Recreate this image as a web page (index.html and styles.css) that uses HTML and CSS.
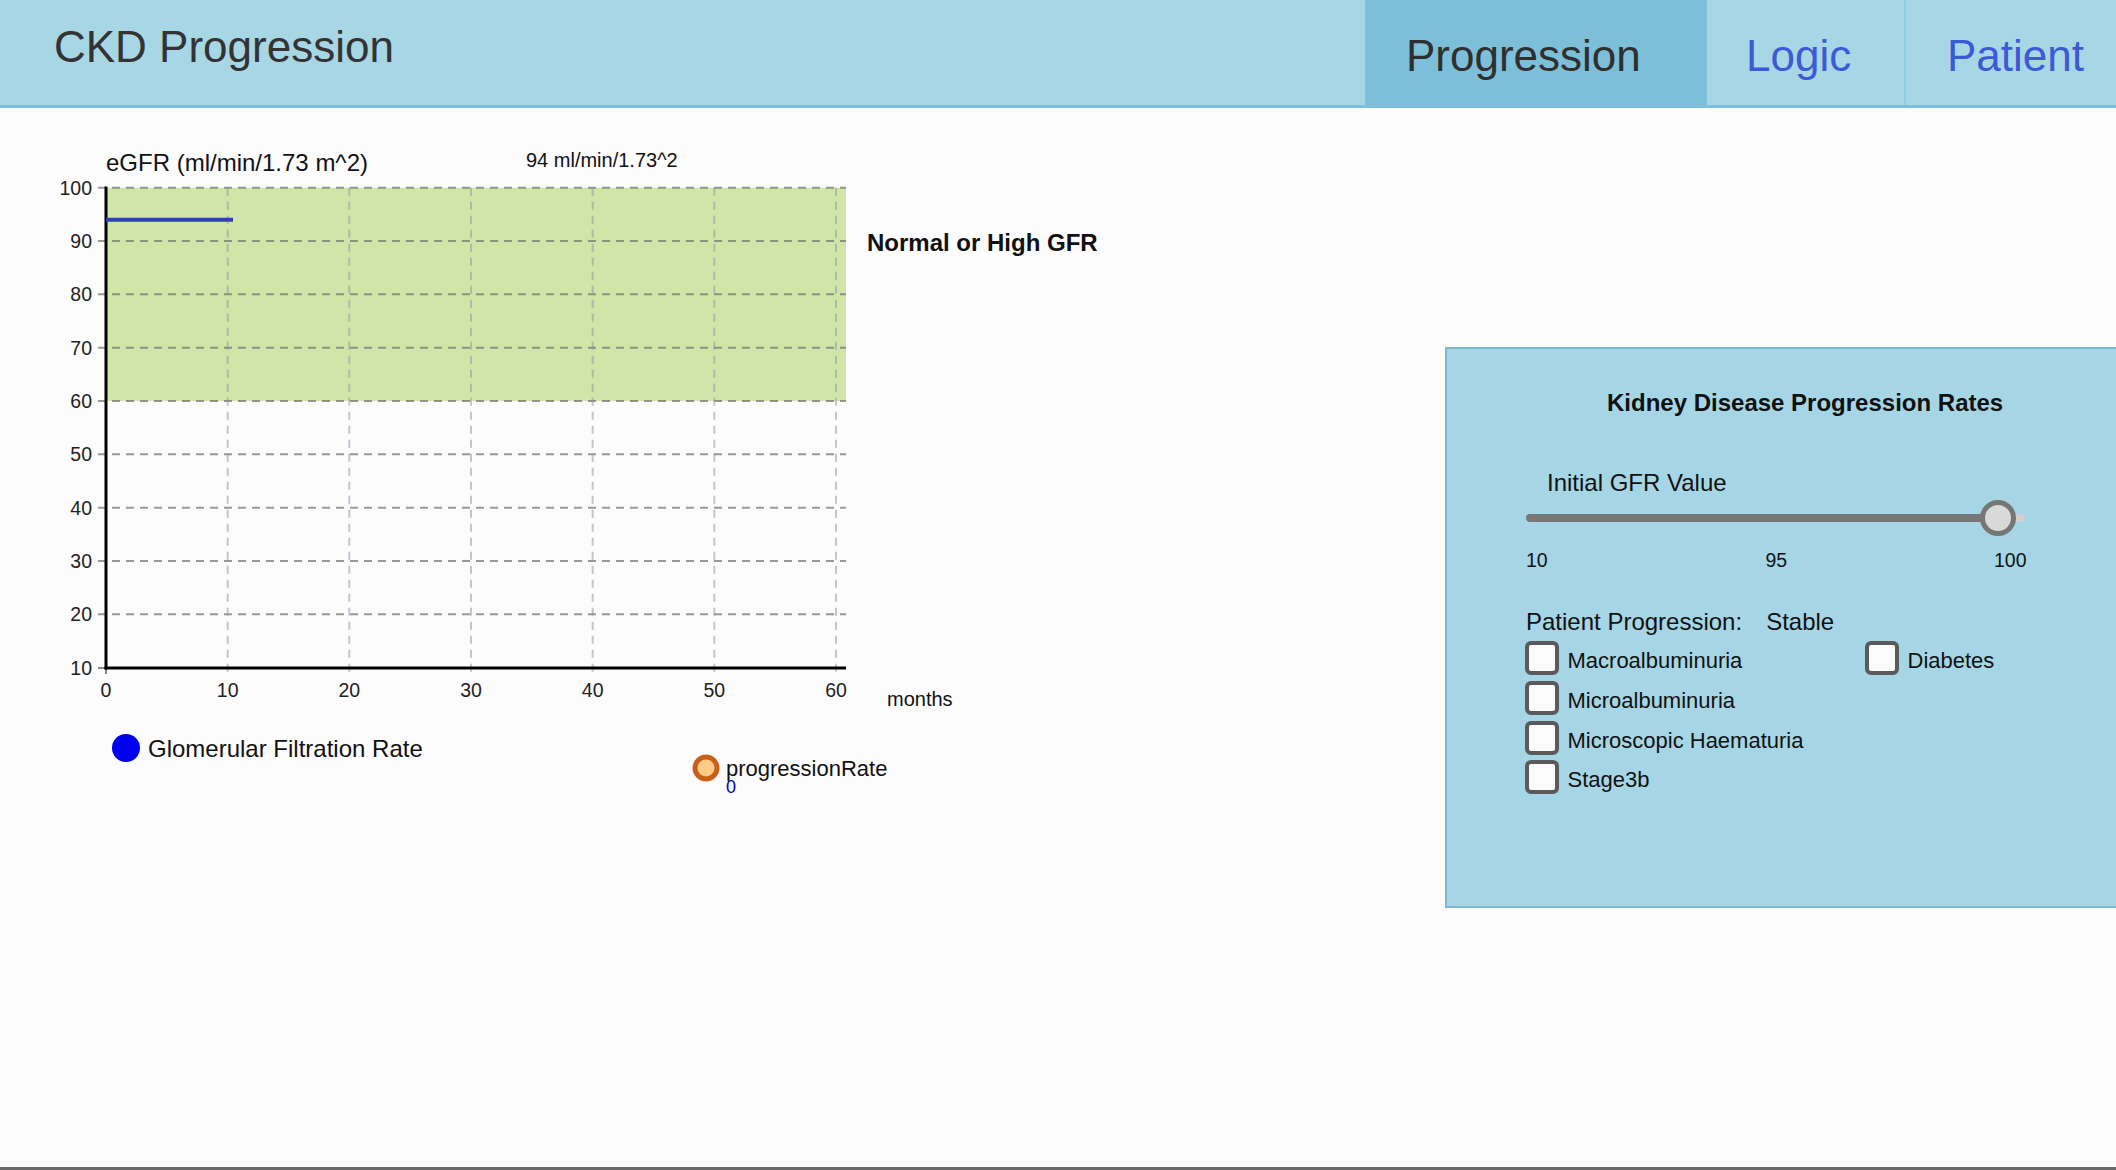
FILE: index.html
```html
<!DOCTYPE html>
<html lang="en">
<head>
<meta charset="utf-8">
<title>CKD Progression</title>
<link rel="stylesheet" href="styles.css">
</head>
<body>
<div class="page">
  <header class="topbar">
    <h1 class="brand">CKD Progression</h1>
    <nav class="tabs">
      <a class="tab tab-progression active">Progression</a>
      <a class="tab tab-logic">Logic</a>
      <a class="tab tab-patient">Patient</a>
    </nav>
  </header>
  <main class="content">
    <svg class="chart" width="1160" height="700" viewBox="0 108 1160 700" xmlns="http://www.w3.org/2000/svg">
      <rect class="zone-normal" x="106" y="187.7" width="740" height="213.3"/>
      <g class="grid-h">
        <line x1="98" y1="187.7" x2="846" y2="187.7"/>
        <line x1="98" y1="241" x2="846" y2="241"/>
        <line x1="98" y1="294.3" x2="846" y2="294.3"/>
        <line x1="98" y1="347.7" x2="846" y2="347.7"/>
        <line x1="98" y1="401" x2="846" y2="401"/>
        <line x1="98" y1="454.3" x2="846" y2="454.3"/>
        <line x1="98" y1="507.7" x2="846" y2="507.7"/>
        <line x1="98" y1="561" x2="846" y2="561"/>
        <line x1="98" y1="614.3" x2="846" y2="614.3"/>
      </g>
      <g class="grid-v">
        <line x1="227.7" y1="187.7" x2="227.7" y2="674"/>
        <line x1="349.3" y1="187.7" x2="349.3" y2="674"/>
        <line x1="471" y1="187.7" x2="471" y2="674"/>
        <line x1="592.7" y1="187.7" x2="592.7" y2="674"/>
        <line x1="714.3" y1="187.7" x2="714.3" y2="674"/>
        <line x1="836" y1="187.7" x2="836" y2="674"/>
      </g>
      <line class="tick" x1="98" y1="668" x2="106" y2="668"/>
      <line class="tick" x1="106" y1="668" x2="106" y2="674"/>
      <line class="axis" x1="106" y1="186.5" x2="106" y2="669.5"/>
      <line class="axis" x1="104.5" y1="668" x2="846" y2="668"/>
      <g class="ylabels">
        <text x="92" y="194.7">100</text>
        <text x="92" y="248">90</text>
        <text x="92" y="301.3">80</text>
        <text x="92" y="354.7">70</text>
        <text x="92" y="408">60</text>
        <text x="92" y="461.3">50</text>
        <text x="92" y="514.7">40</text>
        <text x="92" y="568">30</text>
        <text x="92" y="621.3">20</text>
        <text x="92" y="675">10</text>
      </g>
      <g class="xlabels">
        <text x="106" y="697">0</text>
        <text x="227.7" y="697">10</text>
        <text x="349.3" y="697">20</text>
        <text x="471" y="697">30</text>
        <text x="592.7" y="697">40</text>
        <text x="714.3" y="697">50</text>
        <text x="836" y="697">60</text>
      </g>
      <line class="gfr-line" x1="106" y1="219.7" x2="233" y2="219.7"/>
      <text class="y-title" x="106" y="171">eGFR (ml/min/1.73 m^2)</text>
      <text class="current" x="526" y="167">94 ml/min/1.73^2</text>
      <text class="zone-label" x="867" y="251">Normal or High GFR</text>
      <text class="x-title" x="887" y="706">months</text>
      <circle class="legend-gfr" cx="126" cy="748" r="14"/>
      <text class="legend-text" x="148" y="757">Glomerular Filtration Rate</text>
      <circle class="legend-rate" cx="706" cy="768" r="11"/>
      <text class="legend-rate-text" x="726" y="776">progressionRate</text>
      <text class="legend-rate-value" x="726" y="793">0</text>
    </svg>

    <section class="panel">
      <h2 class="panel-title">Kidney Disease Progression Rates</h2>
      <div class="slider-label">Initial GFR Value</div>
      <div class="slider">
        <div class="track">
          <div class="track-fill"></div>
        </div>
        <div class="thumb"></div>
      </div>
      <div class="slider-scale">
        <span class="scale-min">10</span>
        <span class="scale-val">95</span>
        <span class="scale-max">100</span>
      </div>
      <div class="status">
        <span>Patient Progression:</span><span class="status-value">Stable</span>
      </div>
      <div class="checks">
        <div class="check-col">
          <label class="check"><span class="box"></span><span class="check-text">Macroalbuminuria</span></label>
          <label class="check"><span class="box"></span><span class="check-text">Microalbuminuria</span></label>
          <label class="check"><span class="box"></span><span class="check-text">Microscopic Haematuria</span></label>
          <label class="check"><span class="box"></span><span class="check-text">Stage3b</span></label>
        </div>
        <div class="check-col">
          <label class="check"><span class="box"></span><span class="check-text">Diabetes</span></label>
        </div>
      </div>
    </section>
  </main>
</div>
</body>
</html>
```

FILE: styles.css
```css
html, body {
  margin: 0;
  padding: 0;
  background: #fcfcfd;
  overflow: hidden;
}

body {
  font-family: "Liberation Sans", Arial, sans-serif;
  color: #111;
}

.page {
  width: 2116px;
  height: 1170px;
  box-sizing: border-box;
  border-bottom: 3px solid #6a6a6a;
  display: flex;
  flex-direction: column;
}

/* ---------- header ---------- */
.topbar {
  height: 108px;
  box-sizing: border-box;
  background: #a7d6e5;
  border-bottom: 3px solid #7abfdb;
  display: flex;
  justify-content: space-between;
  flex-shrink: 0;
}

.brand {
  margin: 0;
  padding: 22px 0 0 54px;
  font-size: 44px;
  line-height: 50px;
  font-weight: normal;
  color: #333;
}

.tabs {
  display: flex;
  height: 105px;
}

.tab {
  box-sizing: border-box;
  height: 105px;
  padding: 31px 0 0 41px;
  font-size: 44px;
  line-height: 50px;
  color: #3d5ad6;
  text-decoration: none;
}

.tab-progression {
  width: 342px;
}

.tab-logic {
  width: 197px;
  padding-left: 39px;
}

.tab-patient {
  width: 212px;
  padding-left: 41px;
  border-left: 2px solid #8ccbe2;
}

.tab.active {
  background: #7dbfd9;
  color: #2f2f2f;
}

/* ---------- main ---------- */
.content {
  flex: 1;
  display: flex;
  align-items: flex-start;
}

.chart {
  display: block;
  flex-shrink: 0;
}

.chart text {
  font-family: "Liberation Sans", Arial, sans-serif;
  fill: #111;
}

.zone-normal {
  fill: #d0e6a9;
}

.grid-h line {
  stroke: #6e6e6e;
  stroke-opacity: 0.7;
  stroke-width: 2;
  stroke-dasharray: 8 6;
}

.grid-v line {
  stroke: #8a90a0;
  stroke-opacity: 0.5;
  stroke-width: 2;
  stroke-dasharray: 8 6;
}

.tick {
  stroke: #888;
  stroke-width: 2;
}

.axis {
  stroke: #000;
  stroke-width: 3;
}

.ylabels text {
  font-size: 19.5px;
  text-anchor: end;
  fill: #222;
}

.xlabels text {
  font-size: 19.5px;
  text-anchor: middle;
  fill: #222;
}

.gfr-line {
  stroke: #3040b0;
  stroke-width: 4;
}

.y-title {
  font-size: 24px;
}

.current {
  font-size: 20px;
}

.zone-label {
  font-size: 24px;
  font-weight: bold;
}

.x-title {
  font-size: 20px;
}

.legend-gfr {
  fill: #0000ee;
}

.legend-text {
  font-size: 24px;
}

.legend-rate {
  fill: #ffcc88;
  stroke: #c8601a;
  stroke-width: 5;
}

.legend-rate-text {
  font-size: 22px;
}

.chart .legend-rate-value {
  font-size: 18px;
  fill: #0000aa;
}

/* ---------- panel ---------- */
.panel {
  margin-left: auto;
  margin-top: 239px;
  width: 671px;
  height: 561px;
  box-sizing: border-box;
  background: #a6d6e5;
  border: 2px solid #7cb9d1;
  border-right: none;
  padding: 39px 0 0 79px;
  color: #111;
}

.panel-title {
  margin: 0 0 0 81px;
  font-size: 24px;
  line-height: 30px;
  font-weight: bold;
}

.slider-label {
  margin: 50px 0 0 21px;
  font-size: 24px;
  line-height: 30px;
}

.slider {
  position: relative;
  width: 499px;
  height: 36px;
  margin-top: 2px;
  display: flex;
  align-items: center;
}

.track {
  width: 499px;
  height: 8px;
  border-radius: 4px;
  background: #cfcfd4;
  overflow: hidden;
}

.track-fill {
  width: 472px;
  height: 8px;
  background: #777;
}

.thumb {
  position: absolute;
  left: 454px;
  top: 0;
  width: 26px;
  height: 26px;
  border: 5px solid #767676;
  border-radius: 50%;
  background: #d9d9d9;
}

.slider-scale {
  display: flex;
  margin-top: 12px;
  font-size: 19.5px;
  line-height: 24px;
}

.scale-min {
  width: 239.5px;
}

.scale-val {
  width: 228.5px;
}

.status {
  margin-top: 35px;
  font-size: 24px;
  line-height: 30px;
}

.status-value {
  margin-left: 24px;
}

.checks {
  display: flex;
  margin-top: 4px;
  margin-left: -1.5px;
}

.check-col {
  display: flex;
  flex-direction: column;
  gap: 5.8px;
}

.check-col:first-child {
  width: 340px;
}

.check {
  display: flex;
  align-items: flex-start;
  height: 34px;
}

.box {
  width: 26px;
  height: 26px;
  border: 4px solid #5a5a5a;
  border-radius: 6px;
  background: #fbfbfb;
  flex-shrink: 0;
}

.check-text {
  margin-left: 9px;
  padding-top: 5px;
  font-size: 22px;
  line-height: 29px;
}
```
